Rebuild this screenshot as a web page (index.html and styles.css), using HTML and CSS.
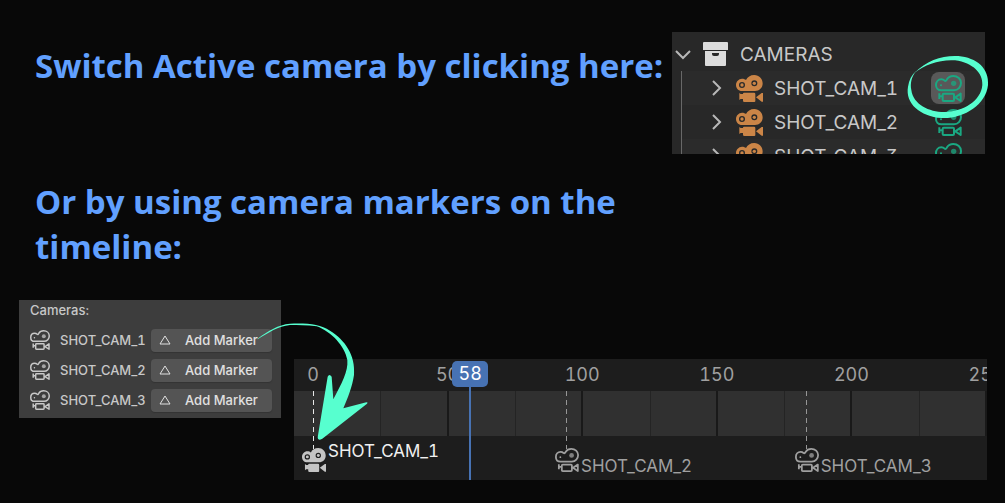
FILE: index.html
```html
<!DOCTYPE html>
<html lang="en">

<head>
    <meta charset="UTF-8">
    <meta name="viewport" content="width=device-width, initial-scale=1.0">
    <title>Switching the active camera</title>
    <link rel="stylesheet" href="styles.css">
</head>

<body>

    <!-- shared icons -->
    <svg class="icon-defs" aria-hidden="true">
        <symbol id="camera-solid" viewBox="0 0 81 81">
            <path fill="currentColor" fill-rule="evenodd" d="M18 11c6 0 9 2 12 4C34 6 43 0 55 0c14 0 25 11 25 25S70 48 57 48H18C7 48 0 40 0 30S8 11 18 11ZM18 21a9 9 0 1 0 0 18a9 9 0 1 0 0-18ZM55 16a9 9 0 1 0 0 18a9 9 0 1 0 0-18Z" />
            <circle fill="currentColor" cx="18" cy="30" r="5" />
            <circle fill="currentColor" cx="55" cy="25" r="5" />
            <path fill="currentColor" d="M10 54l4 3h7v-1q0-3 3-3h30q4 0 4 4v21q0 3-3 3H25q-4 0-4-4v-5h-7l-4 3ZM60 67l17-13h4v26h-4Z" />
        </symbol>
        <symbol id="camera-line" viewBox="0 0 81 81">
            <g fill="none" stroke="currentColor" stroke-width="6" stroke-linejoin="round">
                <path d="M19 13c5 0 8 2 10 4c3 2 5 0 7-4C40 6 46 3 55 3c13 0 23 9 23 21S69 46 57 46H19C9 46 3 39 3 30s6-17 16-17Z" />
                <path d="M26 56h28q3 0 3 3v16q0 3-3 3H26q-3 0-3-3V59q0-3 3-3ZM13 55v17M13 64h9M61 67l16-11v22Z" />
            </g>
            <circle fill="currentColor" cx="18" cy="31" r="3" />
            <circle fill="currentColor" cx="56" cy="25" r="8" opacity=".75" />
        </symbol>
    </svg>

    <section class="switch">
        <h2>Switch Active camera by clicking here:</h2>

        <div class="outliner">
            <div class="row collection">
                <button class="arrow" aria-label="Collapse"><svg viewBox="0 0 16 16"><path d="M1 5l7 7 7-7" /></svg></button>
                <svg class="box" viewBox="0 0 25 24">
                    <path d="M1 0h23q1 0 1 1v7H0V1q0-1 1-1ZM2 9h21v14q0 1-1 1H3q-1 0-1-1Z" />
                    <path class="slot" d="M9 11h7v1q0 2-2 2h-3q-2 0-2-2Z" />
                </svg>
                <span>CAMERAS</span>
            </div>
            <div class="row camera">
                <button class="arrow" aria-label="Expand"><svg viewBox="0 0 16 16"><path d="M4 1l7 7-7 7" /></svg></button>
                <svg class="object"><use href="#camera-solid" /></svg>
                <span>SHOT_CAM_1</span>
                <button class="toggle active" aria-label="Set SHOT_CAM_1 active"><svg><use href="#camera-line" /></svg></button>
            </div>
            <div class="row camera">
                <button class="arrow" aria-label="Expand"><svg viewBox="0 0 16 16"><path d="M4 1l7 7-7 7" /></svg></button>
                <svg class="object"><use href="#camera-solid" /></svg>
                <span>SHOT_CAM_2</span>
                <button class="toggle" aria-label="Set SHOT_CAM_2 active"><svg><use href="#camera-line" /></svg></button>
            </div>
            <div class="row camera">
                <button class="arrow" aria-label="Expand"><svg viewBox="0 0 16 16"><path d="M4 1l7 7-7 7" /></svg></button>
                <svg class="object"><use href="#camera-solid" /></svg>
                <span>SHOT_CAM_3</span>
                <button class="toggle" aria-label="Set SHOT_CAM_3 active"><svg><use href="#camera-line" /></svg></button>
            </div>
        </div>

        <svg class="circle" viewBox="225 84 258 204" aria-hidden="true">
            <path d="M253 144C290 105 340 90 385 93C440 98 478 130 474 180C468 240 400 282 335 279C270 274 225 235 234 185C237 165 245 150 258 138C245 155 240 175 244 195C250 240 300 262 345 261C400 259 453 228 457 180C459 145 430 114 375 106C330 103 285 118 253 144Z" />
        </svg>
    </section>

    <section class="markers">
        <h2>Or by using camera markers on the timeline:</h2>

        <div class="editors">
            <div class="panel">
                <p>Cameras:</p>
                <div class="panel-row">
                    <svg><use href="#camera-line" /></svg>
                    <span>SHOT_CAM_1</span>
                    <button><svg viewBox="0 0 12 10"><path d="M6 1l5 8H1Z" /></svg>Add Marker</button>
                </div>
                <div class="panel-row">
                    <svg><use href="#camera-line" /></svg>
                    <span>SHOT_CAM_2</span>
                    <button><svg viewBox="0 0 12 10"><path d="M6 1l5 8H1Z" /></svg>Add Marker</button>
                </div>
                <div class="panel-row">
                    <svg><use href="#camera-line" /></svg>
                    <span>SHOT_CAM_3</span>
                    <button><svg viewBox="0 0 12 10"><path d="M6 1l5 8H1Z" /></svg>Add Marker</button>
                </div>
            </div>

            <div class="timeline">
                <div class="numbers">
                    <span>0</span><span>50</span><span>100</span><span>150</span><span>200</span><span>250</span>
                </div>
                <div class="track">
                    <i></i><i></i><i></i><i></i><i></i><i></i><i></i><i></i><i></i><i></i>
                </div>
                <!-- left = frame / 250 -->
                <div class="frames">
                    <div class="marker selected" style="left: 0%">
                        <svg><use href="#camera-solid" /></svg><span>SHOT_CAM_1</span>
                    </div>
                    <div class="marker" style="left: 37.6%">
                        <svg><use href="#camera-line" /></svg><span>SHOT_CAM_2</span>
                    </div>
                    <div class="marker" style="left: 73.2%">
                        <svg><use href="#camera-line" /></svg><span>SHOT_CAM_3</span>
                    </div>
                    <div class="playhead" style="left: 23.2%"><b>58</b></div>
                </div>
            </div>

            <svg class="pointer" viewBox="30 60 345 366" aria-hidden="true">
                <path d="M38 116C70 92 100 74 135 71C190 69 225 73 255 92C300 120 332 165 327 225C322 260 308 295 295 325L364 307Q370 307 366 311L232 416Q218 424 218 412L248 230Q253 220 260 230L265 298C290 250 310 215 307 180C300 140 260 95 215 79C185 75 160 75 135 75C100 78 70 98 38 118Z" />
            </svg>
        </div>
    </section>

</body>

</html>
```
FILE: styles.css
```css
* {
    box-sizing: border-box;
}

body {
    margin: 0;
    padding: 32px 18px 23px 19px;
    background-color: #080808;
    color: #c8c8c8;
    font-family: Inter, "Liberation Sans", sans-serif;
    font-variant-numeric: tabular-nums;
}

h2 {
    margin: 0;
    padding-left: 16px;
    color: #61a0ff;
    font-family: "Open Sans", "Noto Sans", sans-serif;
    font-size: 33px;
    font-weight: 700;
    line-height: 45px;
}

p {
    margin: 0;
}

svg {
    display: block;
    flex: none;
}

button {
    padding: 0;
    border: none;
    background: none;
    color: inherit;
    font: inherit;
}

.icon-defs {
    position: absolute;
    width: 0;
    height: 0;
}

/* outliner */

.switch {
    position: relative;
    display: flex;
    justify-content: space-between;
    padding-right: 2px;
}

.switch h2 {
    padding-top: 11px;
    white-space: nowrap;
}

.outliner {
    flex: 0 0 313px;
    height: 122px;
    padding-top: 5px;
    overflow: hidden;
    background-color: #282828;
    font-size: 19px;
    font-feature-settings: "cv09";
}

.row {
    display: flex;
    align-items: center;
    height: 34px;
    background-color: #2b2b2b;
}

.row:nth-child(odd) {
    background-color: #282828;
}

.collection {
    gap: 12px;
    padding-left: 3px;
}

.camera {
    gap: 11px;
    margin-left: 9px;
    padding-left: 27px;
    padding-right: 20px;
    border-left: 1px solid #686868;
}

.arrow svg {
    width: 16px;
    height: 16px;
    fill: none;
    stroke: #b8b8b8;
    stroke-width: 2;
}

.box {
    width: 25px;
    height: 24px;
    fill: #dcdcdc;
}

.box .slot {
    fill: #282828;
}

.object {
    width: 27px;
    height: 27px;
    color: #cb8547;
}

.toggle {
    display: grid;
    place-items: center;
    width: 34px;
    height: 32px;
    margin-left: auto;
    border-radius: 8px;
    color: #1aa882;
}

.toggle svg {
    width: 27px;
    height: 27px;
}

.toggle.active {
    background-color: #595959;
}

.circle {
    position: absolute;
    top: 21px;
    right: -4px;
    width: 86px;
    height: 68px;
    fill: #57ffcf;
}

/* marker panel and timeline */

.markers h2 {
    max-width: 660px;
    margin-top: 25px;
}

.editors {
    position: relative;
    display: flex;
    align-items: flex-start;
    gap: 13px;
    margin-top: 31px;
}

.panel {
    flex: 0 0 262px;
    padding: 0 9px 3px 11px;
    background-color: #3d3d3d;
    font-size: 13px;
    font-weight: 500;
}

.panel p {
    height: 25px;
    line-height: 20px;
}

.panel-row {
    display: flex;
    align-items: center;
    height: 30px;
}

.panel-row > svg {
    width: 20px;
    height: 20px;
    margin-right: 10px;
}

.panel-row button {
    display: flex;
    align-items: center;
    width: 121px;
    height: 23px;
    margin-left: auto;
    border-radius: 4px;
    background-color: #545454;
    color: #e0e0e0;
    box-shadow: 0 1px 1px #333;
}

.panel-row button svg {
    width: 12px;
    height: 10px;
    margin: 0 14px 0 8px;
    fill: none;
    stroke: #e0e0e0;
}

.timeline {
    position: relative;
    flex: 1;
    height: 121px;
    margin-top: 59px;
    overflow: hidden;
    background-color: #1d1d1d;
}

.numbers {
    display: flex;
    justify-content: space-between;
    height: 32px;
    padding: 0 1px 0 19px;
    color: #a0a0a0;
    font-size: 18px;
    line-height: 32px;
}

/* zero width keeps each number centred on its line */
.numbers span {
    display: flex;
    justify-content: center;
    width: 0;
}

.track {
    display: grid;
    grid-template-columns: repeat(10, 1fr);
    height: 45px;
    padding: 0 0 0 20px;
    background-color: #303030;
}

.track i {
    border-right: 1px solid #242424;
}

.track i:nth-child(even) {
    border-right: 2px solid #191919;
}

.frames {
    position: absolute;
    inset: 0 1px 0 19px;
}

.marker {
    position: absolute;
    top: 32px;
    display: flex;
    gap: 2px;
    padding-top: 57px;
    color: #a0a0a0;
    font-size: 17px;
    line-height: 20px;
}

.marker::before {
    content: "";
    position: absolute;
    top: 0;
    left: 0;
    width: 1px;
    height: 58px;
    background: repeating-linear-gradient(#969696 0 5px, transparent 5px 9px);
}

.marker svg {
    width: 24px;
    height: 24px;
    margin-left: -11px;
}

.marker span {
    padding-top: 8px;
}

.selected {
    color: #f0f0f0;
}

.selected::before {
    background: repeating-linear-gradient(#e8e8e8 0 5px, transparent 5px 9px);
}

.selected svg {
    color: #c4c4c4;
}

.selected span {
    padding: 0;
    margin-top: -7px;
}

.playhead {
    position: absolute;
    top: 2px;
    bottom: 0;
    display: flex;
    justify-content: center;
    width: 2px;
    background-color: #4772b3;
}

.playhead b {
    flex: none;
    width: 36px;
    height: 26px;
    border-radius: 5px;
    background-color: #4772b3;
    color: #fff;
    font-size: 18px;
    font-weight: 400;
    line-height: 26px;
    text-align: center;
}

.pointer {
    position: absolute;
    top: 20px;
    left: 236px;
    width: 115px;
    height: 122px;
    fill: #57ffcf;
}
```
